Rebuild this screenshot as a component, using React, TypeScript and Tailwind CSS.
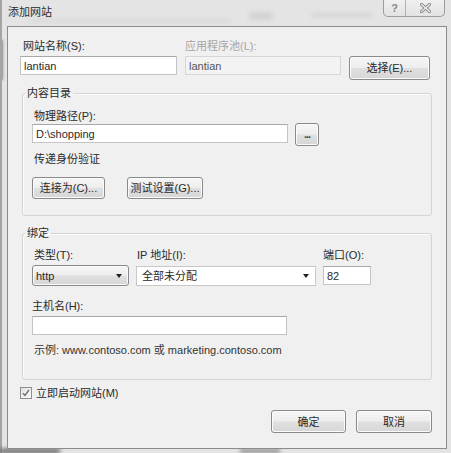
import React from "react";

const btn =
  "flex items-center justify-center border border-[#8a8a8a] rounded-[3px] bg-[linear-gradient(to_bottom,#f6f6f6_0%,#eeeeee_48%,#e0e0e0_52%,#d6d6d6_100%)] shadow-[inset_0_0_0_1px_#fbfbfb] text-[11px] leading-[16px] text-[#2a2a2a]";

const input =
  "h-[19px] border border-[#c4c4c4] border-t-[#a8a8a8] bg-white px-[2px] flex items-center text-[11px] leading-[16px] text-[#2a2a2a]";

function Arrow() {
  return (
    <svg width="6" height="4" viewBox="0 0 6 4" className="shrink-0">
      <path d="M0 0 L6 0 L3 4 Z" fill="#222" />
    </svg>
  );
}

export default function App() {
  return (
    <div className="relative w-[451px] h-[453px] overflow-hidden bg-[#e4e4e4] font-['Liberation_Sans','Noto_Sans_CJK_SC',sans-serif] text-[11px] text-[#2a2a2a]">
      {/* blurred background hints behind the glass frame */}
      <div className="absolute left-0 top-[40px] w-[3px] h-[40px] bg-[#8a8a8a] blur-[1px]" />
      <div className="absolute left-0 top-[0px] w-[2px] h-[453px] bg-[#a4a4a4]" />
      <div className="absolute left-0 bottom-0 w-[60px] h-[4px] bg-[#555] blur-[2px]" />
      <div className="absolute left-[240px] bottom-0 w-[40px] h-[4px] bg-[#8a8a8a] blur-[2px]" />
      <div className="absolute left-[250px] top-[12px] w-[22px] h-[8px] bg-[#d2d2d2] blur-[2px]" />
      <div className="absolute left-[312px] top-[13px] w-[60px] h-[4px] bg-[#d4d4d4] blur-[2px]" />
      <div className="absolute left-[30px] top-[19px] w-[200px] h-[4px] bg-[#dadada] blur-[2px]" />

      {/* title bar */}
      <div className="relative h-[26px] pl-[8px] pt-[4px] leading-[16px] text-[11px] text-[#2a2a2a]">
        添加网站
      </div>

      {/* caption buttons */}
      <div className="absolute top-0 right-[6px] flex h-[17px] w-[62px] border border-t-0 border-[#9c9c9c] rounded-b-[5px] bg-[linear-gradient(to_bottom,#f0f0f0,#e2e2e2)] overflow-hidden">
        <div className="w-[22px] h-full border-r border-[#b0b0b0] flex items-center justify-center text-[11px] leading-[12px] text-[#8a8a8a] font-bold">
          ?
        </div>
        <div className="flex-1 h-full flex items-center justify-center">
          <svg width="11" height="10" viewBox="0 0 11 10">
            <path d="M1.5 1.5 L9.5 8.5 M9.5 1.5 L1.5 8.5" stroke="#8a8a8a" strokeWidth="3.2" strokeLinecap="square" />
            <path d="M1.5 1.5 L9.5 8.5 M9.5 1.5 L1.5 8.5" stroke="#f4f4f4" strokeWidth="1.2" strokeLinecap="square" />
          </svg>
        </div>
      </div>

      {/* client area */}
      <div className="relative ml-[7px] w-[440px] h-[423px] border border-[#8c8c8c] bg-[#f0f0f0]">
        {/* row 1 */}
        <div className="flex pt-[11px]">
          <div className="ml-[12px] w-[157px] flex flex-col">
            <div className="pl-[3px] h-[16px] leading-[16px]">网站名称(S):</div>
            <div className={`${input} mt-[2px] pl-[3px]`}>lantian</div>
          </div>
          <div className="ml-[8px] w-[156px] flex flex-col">
            <div className="h-[16px] leading-[16px] text-[#a6a6a6]">应用程序池(L):</div>
            <div className="mt-[2px] h-[19px] border border-[#d6d6d6] bg-[#f3f3f3] pl-[3px] flex items-center leading-[16px] text-[#555]">
              lantian
            </div>
          </div>
          <div className="ml-[8px] flex flex-col">
            <div className="h-[18px]" />
            <div className={`${btn} w-[81px] h-[24px]`}>选择(E)...</div>
          </div>
        </div>

        {/* content directory group */}
        <fieldset className="mt-[5px] ml-[14px] w-[410px] border border-[#d4d4d4] rounded-[3px] shadow-[inset_1px_1px_0_#fbfbfb]">
          <legend className="ml-[2px] px-[2px] leading-[16px] text-[11px]">内容目录</legend>
          <div className="pl-[9px] pt-[7px] pb-[16px]">
            <div className="pl-[2px] h-[16px] leading-[16px]">物理路径(P):</div>
            <div className="flex items-start h-[22px]">
              <div className={`${input} w-[256px] pl-[3px]`}>D:\shopping</div>
              <div className={`${btn} ml-[7px] -mt-[1px] w-[24px] h-[23px] text-[9px]`}>
                <span className="-mt-[2px] tracking-[-1px] font-bold text-[#444]">...</span>
              </div>
            </div>
            <div className="mt-[5px] pl-[2px] h-[16px] leading-[16px]">传递身份验证</div>
            <div className="mt-[10px] flex">
              <div className={`${btn} w-[73px] h-[22px]`}>连接为(C)...</div>
              <div className={`${btn} ml-[22px] w-[76px] h-[22px]`}>测试设置(G)...</div>
            </div>
          </div>
        </fieldset>

        {/* binding group */}
        <fieldset className="mt-[9px] ml-[14px] w-[410px] border border-[#d4d4d4] rounded-[3px] shadow-[inset_1px_1px_0_#fbfbfb]">
          <legend className="ml-[2px] px-[2px] leading-[16px] text-[11px]">绑定</legend>
          <div className="pl-[9px] pt-[6px] pb-[21px]">
            <div className="flex h-[16px] leading-[16px]">
              <div className="w-[97px] pl-[2px]">类型(T):</div>
              <div className="ml-[7px] w-[180px] pl-[1px]">IP 地址(I):</div>
              <div className="ml-[7px] w-[48px]">端口(O):</div>
            </div>
            <div className="mt-[2px] flex items-start">
              <div className={`${btn} w-[97px] h-[21px] !justify-between pl-[3px] pr-[6px]`}>
                <span>http</span>
                <Arrow />
              </div>
              <div className="ml-[7px] mt-[1px] w-[180px] h-[20px] border border-[#c8c8c8] bg-white flex items-center justify-between pl-[5px] pr-[6px] leading-[16px]">
                <span>全部未分配</span>
                <Arrow />
              </div>
              <div className={`${input} ml-[7px] mt-[1px] w-[48px] pl-[3px]`}>82</div>
            </div>
            <div className="mt-[12px] h-[16px] leading-[16px]">主机名(H):</div>
            <div className={`${input} mt-[2px] w-[255px]`} />
            <div className="mt-[7px] pl-[2px] h-[16px] leading-[16px] text-[#333]">
              示例: www.contoso.com 或 marketing.contoso.com
            </div>
          </div>
        </fieldset>

        {/* checkbox */}
        <div className="mt-[5px] ml-[12px] flex items-center h-[16px]">
          <div className="w-[12px] h-[12px] border border-[#8e8e8e] bg-[linear-gradient(135deg,#e2e2e2,#fbfbfb)] flex items-center justify-center">
            <svg width="8" height="8" viewBox="0 0 8 8">
              <path d="M1 4.2 L3 6.5 L7 1" fill="none" stroke="#6a6a6a" strokeWidth="1.3" />
            </svg>
          </div>
          <span className="ml-[4px] leading-[16px]">立即启动网站(M)</span>
        </div>

        {/* dialog buttons */}
        <div className="mt-[9px] flex justify-end pr-[14px] gap-[10px]">
          <div className={`${btn} w-[75px] h-[23px]`}>确定</div>
          <div className={`${btn} w-[76px] h-[23px]`}>取消</div>
        </div>
      </div>
    </div>
  );
}
